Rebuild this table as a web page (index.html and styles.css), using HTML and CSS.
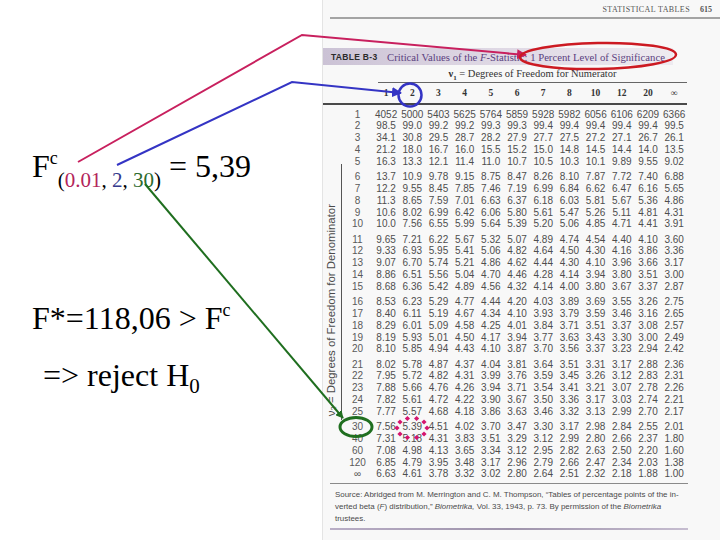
FILE: index.html
```html
<!DOCTYPE html>
<html>
<head>
<meta charset="utf-8">
<title>F test</title>
<link rel="stylesheet" href="styles.css">
</head>
<body>
<div class="slide">
  <div class="left">
    <div class="eq eq1">F<sup>c</sup><sub>(<span class="pink">0.01</span>, <span class="blue">2</span>, <span class="green">30</span>)</sub> = 5,39</div>
    <div class="eq eq2">F*=118,06 &gt; F<sup>c</sup></div>
    <div class="eq eq3">=&gt; reject H<sub>0</sub></div>
  </div>
  <div class="photo">
    <div class="runhead"><span>STATISTICAL TABLES</span><span class="pg">615</span></div>
    <div class="band"><span class="tno">TABLE B-3</span><span class="ttl">Critical Values of the <i>F</i>-Statistic: 1 Percent Level of Significance</span></div>
    <div class="nu1"><b>ν<sub>1</sub></b> = Degrees of Freedom for Numerator</div>
    <div class="colhead">
      <span></span><span>1</span><span>2</span><span>3</span><span>4</span><span>5</span><span>6</span><span>7</span><span>8</span><span>10</span><span>12</span><span>20</span><span>∞</span>
    </div>
    <div class="body">
      <div class="axis"><span>ν<sub>2</sub> = Degrees of Freedom for Denominator</span></div>
      <div class="rows">
        <div class="row"><span>1</span><span>4052</span><span>5000</span><span>5403</span><span>5625</span><span>5764</span><span>5859</span><span>5928</span><span>5982</span><span>6056</span><span>6106</span><span>6209</span><span>6366</span></div>
        <div class="row"><span>2</span><span>98.5</span><span>99.0</span><span>99.2</span><span>99.2</span><span>99.3</span><span>99.3</span><span>99.4</span><span>99.4</span><span>99.4</span><span>99.4</span><span>99.4</span><span>99.5</span></div>
        <div class="row"><span>3</span><span>34.1</span><span>30.8</span><span>29.5</span><span>28.7</span><span>28.2</span><span>27.9</span><span>27.7</span><span>27.5</span><span>27.2</span><span>27.1</span><span>26.7</span><span>26.1</span></div>
        <div class="row"><span>4</span><span>21.2</span><span>18.0</span><span>16.7</span><span>16.0</span><span>15.5</span><span>15.2</span><span>15.0</span><span>14.8</span><span>14.5</span><span>14.4</span><span>14.0</span><span>13.5</span></div>
        <div class="row"><span>5</span><span>16.3</span><span>13.3</span><span>12.1</span><span>11.4</span><span>11.0</span><span>10.7</span><span>10.5</span><span>10.3</span><span>10.1</span><span>9.89</span><span>9.55</span><span>9.02</span></div>
        <div class="row gs"><span>6</span><span>13.7</span><span>10.9</span><span>9.78</span><span>9.15</span><span>8.75</span><span>8.47</span><span>8.26</span><span>8.10</span><span>7.87</span><span>7.72</span><span>7.40</span><span>6.88</span></div>
        <div class="row"><span>7</span><span>12.2</span><span>9.55</span><span>8.45</span><span>7.85</span><span>7.46</span><span>7.19</span><span>6.99</span><span>6.84</span><span>6.62</span><span>6.47</span><span>6.16</span><span>5.65</span></div>
        <div class="row"><span>8</span><span>11.3</span><span>8.65</span><span>7.59</span><span>7.01</span><span>6.63</span><span>6.37</span><span>6.18</span><span>6.03</span><span>5.81</span><span>5.67</span><span>5.36</span><span>4.86</span></div>
        <div class="row"><span>9</span><span>10.6</span><span>8.02</span><span>6.99</span><span>6.42</span><span>6.06</span><span>5.80</span><span>5.61</span><span>5.47</span><span>5.26</span><span>5.11</span><span>4.81</span><span>4.31</span></div>
        <div class="row"><span>10</span><span>10.0</span><span>7.56</span><span>6.55</span><span>5.99</span><span>5.64</span><span>5.39</span><span>5.20</span><span>5.06</span><span>4.85</span><span>4.71</span><span>4.41</span><span>3.91</span></div>
        <div class="row gs"><span>11</span><span>9.65</span><span>7.21</span><span>6.22</span><span>5.67</span><span>5.32</span><span>5.07</span><span>4.89</span><span>4.74</span><span>4.54</span><span>4.40</span><span>4.10</span><span>3.60</span></div>
        <div class="row"><span>12</span><span>9.33</span><span>6.93</span><span>5.95</span><span>5.41</span><span>5.06</span><span>4.82</span><span>4.64</span><span>4.50</span><span>4.30</span><span>4.16</span><span>3.86</span><span>3.36</span></div>
        <div class="row"><span>13</span><span>9.07</span><span>6.70</span><span>5.74</span><span>5.21</span><span>4.86</span><span>4.62</span><span>4.44</span><span>4.30</span><span>4.10</span><span>3.96</span><span>3.66</span><span>3.17</span></div>
        <div class="row"><span>14</span><span>8.86</span><span>6.51</span><span>5.56</span><span>5.04</span><span>4.70</span><span>4.46</span><span>4.28</span><span>4.14</span><span>3.94</span><span>3.80</span><span>3.51</span><span>3.00</span></div>
        <div class="row"><span>15</span><span>8.68</span><span>6.36</span><span>5.42</span><span>4.89</span><span>4.56</span><span>4.32</span><span>4.14</span><span>4.00</span><span>3.80</span><span>3.67</span><span>3.37</span><span>2.87</span></div>
        <div class="row gs"><span>16</span><span>8.53</span><span>6.23</span><span>5.29</span><span>4.77</span><span>4.44</span><span>4.20</span><span>4.03</span><span>3.89</span><span>3.69</span><span>3.55</span><span>3.26</span><span>2.75</span></div>
        <div class="row"><span>17</span><span>8.40</span><span>6.11</span><span>5.19</span><span>4.67</span><span>4.34</span><span>4.10</span><span>3.93</span><span>3.79</span><span>3.59</span><span>3.46</span><span>3.16</span><span>2.65</span></div>
        <div class="row"><span>18</span><span>8.29</span><span>6.01</span><span>5.09</span><span>4.58</span><span>4.25</span><span>4.01</span><span>3.84</span><span>3.71</span><span>3.51</span><span>3.37</span><span>3.08</span><span>2.57</span></div>
        <div class="row"><span>19</span><span>8.19</span><span>5.93</span><span>5.01</span><span>4.50</span><span>4.17</span><span>3.94</span><span>3.77</span><span>3.63</span><span>3.43</span><span>3.30</span><span>3.00</span><span>2.49</span></div>
        <div class="row"><span>20</span><span>8.10</span><span>5.85</span><span>4.94</span><span>4.43</span><span>4.10</span><span>3.87</span><span>3.70</span><span>3.56</span><span>3.37</span><span>3.23</span><span>2.94</span><span>2.42</span></div>
        <div class="row gs"><span>21</span><span>8.02</span><span>5.78</span><span>4.87</span><span>4.37</span><span>4.04</span><span>3.81</span><span>3.64</span><span>3.51</span><span>3.31</span><span>3.17</span><span>2.88</span><span>2.36</span></div>
        <div class="row"><span>22</span><span>7.95</span><span>5.72</span><span>4.82</span><span>4.31</span><span>3.99</span><span>3.76</span><span>3.59</span><span>3.45</span><span>3.26</span><span>3.12</span><span>2.83</span><span>2.31</span></div>
        <div class="row"><span>23</span><span>7.88</span><span>5.66</span><span>4.76</span><span>4.26</span><span>3.94</span><span>3.71</span><span>3.54</span><span>3.41</span><span>3.21</span><span>3.07</span><span>2.78</span><span>2.26</span></div>
        <div class="row"><span>24</span><span>7.82</span><span>5.61</span><span>4.72</span><span>4.22</span><span>3.90</span><span>3.67</span><span>3.50</span><span>3.36</span><span>3.17</span><span>3.03</span><span>2.74</span><span>2.21</span></div>
        <div class="row"><span>25</span><span>7.77</span><span>5.57</span><span>4.68</span><span>4.18</span><span>3.86</span><span>3.63</span><span>3.46</span><span>3.32</span><span>3.13</span><span>2.99</span><span>2.70</span><span>2.17</span></div>
        <div class="row gs"><span>30</span><span>7.56</span><span>5.39</span><span>4.51</span><span>4.02</span><span>3.70</span><span>3.47</span><span>3.30</span><span>3.17</span><span>2.98</span><span>2.84</span><span>2.55</span><span>2.01</span></div>
        <div class="row"><span>40</span><span>7.31</span><span>5.18</span><span>4.31</span><span>3.83</span><span>3.51</span><span>3.29</span><span>3.12</span><span>2.99</span><span>2.80</span><span>2.66</span><span>2.37</span><span>1.80</span></div>
        <div class="row"><span>60</span><span>7.08</span><span>4.98</span><span>4.13</span><span>3.65</span><span>3.34</span><span>3.12</span><span>2.95</span><span>2.82</span><span>2.63</span><span>2.50</span><span>2.20</span><span>1.60</span></div>
        <div class="row"><span>120</span><span>6.85</span><span>4.79</span><span>3.95</span><span>3.48</span><span>3.17</span><span>2.96</span><span>2.79</span><span>2.66</span><span>2.47</span><span>2.34</span><span>2.03</span><span>1.38</span></div>
        <div class="row"><span>∞</span><span>6.63</span><span>4.61</span><span>3.78</span><span>3.32</span><span>3.02</span><span>2.80</span><span>2.64</span><span>2.51</span><span>2.32</span><span>2.18</span><span>1.88</span><span>1.00</span></div>
      </div>
    </div>
    <div class="source">
      <div>Source: Abridged from M. Merrington and C. M. Thompson, “Tables of percentage points of the in-</div>
      <div>verted beta (<i>F</i>) distribution,” <i>Biometrika,</i> Vol. 33, 1943, p. 73. By permission of the <i>Biometrika</i></div>
      <div>trustees.</div>
    </div>
    <div class="endrule"></div>
  </div>

  <svg class="overlay" width="720" height="540" viewBox="0 0 720 540">
    <defs>
      <marker id="mMag" viewBox="0 0 10 10" refX="9" refY="5" markerWidth="5" markerHeight="5" orient="auto"><path d="M0,0 L10,5 L0,10 z" fill="#c8205e"/></marker>
      <marker id="mBlue" viewBox="0 0 10 10" refX="9" refY="5" markerWidth="5" markerHeight="5" orient="auto"><path d="M0,0 L10,5 L0,10 z" fill="#3434c4"/></marker>
      <marker id="mGreen" viewBox="0 0 10 10" refX="9" refY="5" markerWidth="4" markerHeight="4" orient="auto"><path d="M0,0 L10,5 L0,10 z" fill="#1f6e1f"/></marker>
      <path id="dia" d="M0,-2.6 L2.6,0 L0,2.6 L-2.6,0 z" fill="#d4146e"/>
    </defs>
    <polyline points="78,162 302,35 526,55" fill="none" stroke="#c8205e" stroke-width="2" marker-end="url(#mMag)"/>
    <ellipse cx="598" cy="56" rx="78" ry="13" fill="none" stroke="#cc1a22" stroke-width="2.5" transform="rotate(-1 598 56)"/>
    <polyline points="117,165 292,82 401,93" fill="none" stroke="#3434c4" stroke-width="2" marker-end="url(#mBlue)"/>
    <circle cx="410" cy="95" r="11.5" fill="none" stroke="#3434c4" stroke-width="2.5"/>
    <line x1="145" y1="184" x2="343" y2="418" stroke="#1f6e1f" stroke-width="2" marker-end="url(#mGreen)"/>
    <ellipse cx="356" cy="427" rx="16" ry="9.5" fill="none" stroke="#1f6e1f" stroke-width="3"/>
    <use href="#dia" x="427" y="428"/>
    <use href="#dia" x="424" y="434"/>
    <use href="#dia" x="416.6" y="437.5"/>
    <use href="#dia" x="407.4" y="437.5"/>
    <use href="#dia" x="400" y="434"/>
    <use href="#dia" x="397" y="428"/>
    <use href="#dia" x="400" y="422"/>
    <use href="#dia" x="407.4" y="418.5"/>
    <use href="#dia" x="416.6" y="418.5"/>
    <use href="#dia" x="424" y="422"/>
  </svg>
</div>
</body>
</html>
```

FILE: styles.css
```css
* { box-sizing: border-box; }
html, body { margin: 0; padding: 0; }
body { width: 720px; height: 540px; overflow: hidden; background: #ffffff; }

.slide { position: relative; width: 720px; height: 540px; display: flex; }

/* left: equations */
.left { width: 322px; flex: none; padding-top: 146px; font-family: "Liberation Serif", "Times New Roman", serif; font-size: 32px; color: #000; }
.eq { height: 40px; line-height: 40px; white-space: nowrap; padding-left: 32px; }
.eq2 { margin-top: 112px; }
.eq3 { margin-top: 17px; padding-left: 43px; }
.eq sup, .eq sub { line-height: 0; }
.eq sup { font-size: 18px; vertical-align: 13px; }
.eq1 sub { font-size: 21px; vertical-align: -10px; margin-left: 0; }
.eq3 sub { font-size: 21px; vertical-align: -7px; }
.pink { color: #b3245a; }
.blue { color: #35398c; }
.green { color: #2d6a2d; }

/* right: photographed table */
.photo { width: 398px; flex: none; height: 540px; background: #f8f8f8; border-left: 1px solid #e4e4e4; display: flex; flex-direction: column; font-family: "Liberation Sans", Arial, sans-serif; color: #505050; }

.runhead { margin-left: 7px; height: 19px; border-bottom: 2px solid #a4a4a4; display: flex; justify-content: flex-end; align-items: flex-end; gap: 10px; padding: 0 8px 3px 0; font-family: "Liberation Serif", serif; font-size: 8px; letter-spacing: 0.4px; color: #555; }
.runhead .pg { font-weight: bold; letter-spacing: 0; }

.band { margin-top: 29px; height: 17px; width: 350px; background: linear-gradient(90deg, #cbc2d5 0%, #dcd5e2 40%, #e7e2eb 80%, #eeebf0 100%); display: flex; align-items: center; padding-left: 8px; white-space: nowrap; }
.tno { font-weight: bold; font-size: 8.5px; letter-spacing: 0.3px; color: #2b2b2b; width: 56px; flex: none; }
.ttl { font-family: "Liberation Serif", serif; font-size: 10.7px; color: #5b4180; }

.nu1 { margin-left: 55px; width: 309px; height: 18px; border-bottom: 1px solid #666; text-align: center; font-family: "Liberation Serif", serif; font-size: 10.5px; line-height: 16px; color: #333; padding-top: 1px; }
.nu1 sub { font-size: 7px; line-height: 0; }

.colhead { display: grid; grid-template-columns: 50px repeat(12, 26.2px); width: 364px; height: 22px; border-bottom: 2px solid #4a4a4a; align-items: center; text-align: center; font-family: "Liberation Serif", serif; font-weight: bold; font-size: 9.5px; color: #333; }

.body { display: flex; }
.axis { width: 19px; flex: none; border-right: 1px solid #555; margin-top: 59px; height: 256px; display: flex; flex-direction: column; justify-content: flex-end; align-items: center; padding-bottom: 4px; }
.axis span { writing-mode: vertical-rl; transform: rotate(180deg); font-size: 11.4px; color: #4a4a4a; white-space: nowrap; }
.axis sub { font-size: 7.5px; }

.rows { padding-top: 3.5px; }
.row { display: grid; grid-template-columns: 31px repeat(12, 26.2px); height: 11.85px; line-height: 11.85px; font-size: 10px; text-align: center; color: #4e4e4e; white-space: nowrap; }
.row.gs { margin-top: 3.3px; }
.row span:first-child { color: #5a5a5a; }

.source { margin-top: 2.5px; margin-left: 7px; width: 358px; border-top: 1px solid #8a8a8a; padding: 5px 0 0 5px; font-size: 7.95px; line-height: 12px; color: #4a4a4a; white-space: nowrap; }
.endrule { margin-top: 3px; margin-left: 7px; width: 358px; height: 2px; background: linear-gradient(90deg, #b9aec6, #9e93ab 50%, #c6bdd0); }

.overlay { position: absolute; left: 0; top: 0; pointer-events: none; }
```
